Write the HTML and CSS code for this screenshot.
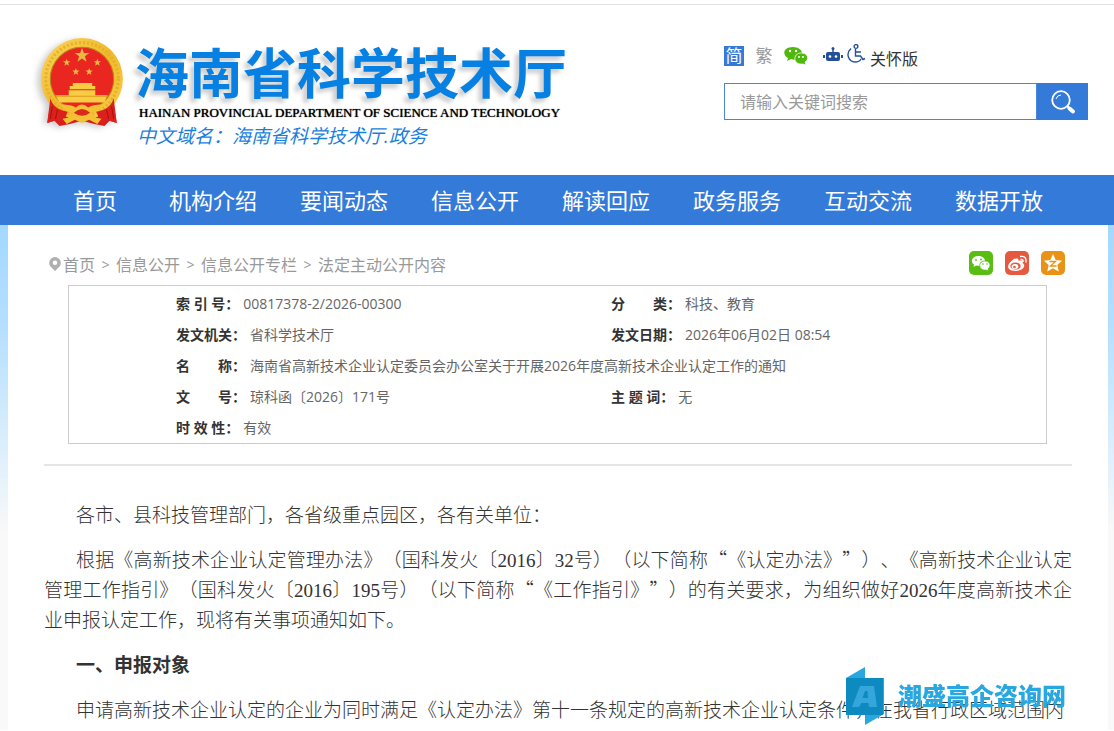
FILE: index.html
```html
<!DOCTYPE html>
<html lang="zh-CN">
<head>
  <meta charset="UTF-8" />
  <meta name="viewport" content="width=device-width, initial-scale=1.0"/>
  <title>海南省科学技术厅</title>
  <link rel="stylesheet" href="styles.css">
</head>
<body>

  <header class="header">
    <a class="logo" href="#">
      <svg class="emblem" viewBox="2 1 84 90" aria-hidden="true">
        <defs>
          <linearGradient id="gold" x1="0" y1="0" x2="1" y2="1">
            <stop offset="0" stop-color="#fbd75c"/>
            <stop offset="0.5" stop-color="#f0b92b"/>
            <stop offset="1" stop-color="#f8cf48"/>
          </linearGradient>
          <path id="star" d="M0-10 2.4-3.2 9.5-3.1 3.8 1.2 5.9 8.1 0 4 -5.9 8.1 -3.8 1.2 -9.5-3.1 -2.4-3.2Z"/>
        </defs>
        <path d="M14 62 10 86 17 84 22 89 32 87 44 84 56 87 66 89 71 84 78 86 74 62Z" fill="#d81e1c"/>
        <circle cx="44" cy="43" r="40" fill="url(#gold)"/>
        <circle cx="44" cy="43" r="35.500" fill="none" stroke="#e5b02c" stroke-width="3" stroke-dasharray="2 2"/>
        <circle cx="44" cy="43" r="31" fill="#e92720" stroke="#b9801b"/>
        <g fill="#e9b941">
          <use href="#star" transform="translate(44 20) scale(.75)"/>
          <use href="#star" transform="translate(29 27) scale(.38)"/>
          <use href="#star" transform="translate(59 27) scale(.38)"/>
          <use href="#star" transform="translate(38 36) scale(.38)"/>
          <use href="#star" transform="translate(51 36) scale(.38)"/>
        </g>
        <path d="M35 47h19v3h3v3H32v-3h3zM31 54h26v5h12l-3 7H22l-4-7h13z" fill="#f8cc43"/>
        <path d="M18 60h52" stroke="#d99b21"/>
        <path d="M13 62q3 11 17 13l-5 12-5-4-10 3zM75 62q-3 11-17 13l5 12 5-4 10 3z" fill="#dc211c"/>
        <path d="M15 70l-2 12M20 73l-2 9M73 70l2 12M68 73l2 9" stroke="#a6120f" fill="none"/>
        <path d="M24 68q10 0 14 3 6-6 12 0 4-3 14-3-2 7-11 8l5 5 5 1-4 5-8-4-7 3-7-3-8 4-4-5 5-1 5-5q-9-1-11-8z" fill="#f4c135"/>
        <path d="M36 76q8-7 16 0-8 6-16 0z" fill="#d92a1c"/>
      </svg>
      <span class="logo-text">
        <strong class="logo-cn">海南省科学技术厅</strong>
        <span class="logo-en">HAINAN PROVINCIAL DEPARTMENT OF SCIENCE AND TECHNOLOGY</span>
        <span class="logo-domain">中文域名：海南省科学技术厅.政务</span>
      </span>
    </a>

    <div class="tools">
      <div class="tool-links">
        <a class="lang lang-on" href="#">简</a>
        <a class="lang" href="#">繁</a>
        <a class="wechat" href="#" aria-label="微信">
          <svg width="24" height="18" viewBox="0 0 24 18">
            <path d="M9 0c5 0 9 3 9 6-5 0-8 3-7 7l-4-1-4 2 1-3C-2 8-1 0 9 0z" fill="#4fb80c"/>
            <path d="M17 6c8 0 8 7 4 9l1 3-3-1c-11 1-10-11-2-11z" fill="#4fb80c" stroke="#fff" stroke-width=".7"/>
            <g fill="#fff"><circle cx="6" cy="4" r="1.200"/><circle cx="12" cy="4" r="1.200"/><circle cx="15" cy="10" r="1"/><circle cx="19" cy="10" r="1"/></g>
          </svg>
        </a>
        <a class="robot" href="#" aria-label="智能问答">
          <svg width="20" height="15" viewBox="0 0 20 15">
            <path d="M10 1v4" stroke="#24509a" stroke-width="1.500"/>
            <circle cx="10" cy="1.500" r="1.500" fill="#24509a"/>
            <rect x="3" y="5" width="14" height="9" rx="2" fill="#24509a"/>
            <path d="M0 8h2v3H0zM18 8h2v3h-2z" fill="#24509a"/>
            <circle cx="7" cy="9.500" r="1.300" fill="#fff"/><circle cx="13" cy="9.500" r="1.300" fill="#fff"/>
          </svg>
        </a>
        <a class="care" href="#">
          <svg width="19" height="20" viewBox="0 0 19 20" fill="none" stroke="#24509a" stroke-width="1.400">
            <circle cx="9" cy="2.500" r="1.900"/>
            <path d="M4 4.500C-2 10 2 18 8 18c3 0 5-1 6-3M8.500 5v7h5l2.500 3.500 2-1M9 8h5"/>
          </svg>
          <span>关怀版</span>
        </a>
      </div>
      <form class="search">
        <input type="text" id="searchInput" placeholder="请输入关键词搜索" aria-label="请输入关键词搜索" />
        <button type="button" aria-label="搜索">
          <svg width="26" height="26" viewBox="0 0 26 26" fill="none" stroke="#fff">
            <circle cx="11" cy="11" r="8.800" stroke-width="1.800"/>
            <path d="M6 10q1-4 5-4" stroke-width="1"/>
            <path d="m17.500 17.500 2 2" stroke-width="2"/>
            <path d="m19.500 19.500 3.500 3" stroke-width="4" stroke-linecap="round"/>
          </svg>
        </button>
      </form>
    </div>
  </header>

  <nav class="nav">
    <a href="#">首页</a>
    <a href="#">机构介绍</a>
    <a href="#">要闻动态</a>
    <a href="#">信息公开</a>
    <a href="#">解读回应</a>
    <a href="#">政务服务</a>
    <a href="#">互动交流</a>
    <a href="#">数据开放</a>
  </nav>

  <div class="page">
    <main class="content">
      <div class="top-bar">
        <div class="crumbs">
          <svg width="12" height="14" viewBox="0 0 12 14"><path d="M6 0a6 6 0 0 1 5 9l-5 5-5-5A6 6 0 0 1 6 0zm0 3.500a2.300 2.300 0 1 0 0 4.600 2.300 2.300 0 0 0 0-4.600z" fill="#b0b0b0"/></svg>
          <a href="#">首页</a><i>&gt;</i><a href="#">信息公开</a><i>&gt;</i><a href="#">信息公开专栏</a><i>&gt;</i><a href="#">法定主动公开内容</a>
        </div>
        <div class="share">
          <a class="share-wechat" href="#" aria-label="分享到微信">
            <svg viewBox="0 0 24 24">
              <path d="M9 5c4 0 7 2 7 5-4 0-6 2-5 5l-4-.5L4.500 16 5 13.500C1 11 3 5 9 5z" fill="#fff"/>
              <path d="M15.500 10c6 0 7 5 3.500 8l.5 2-2.500-1c-8 1-8-9-1.500-9z" fill="#fff" stroke="#5abe12" stroke-width=".7"/>
              <g fill="#5abe12"><circle cx="7" cy="9" r=".9"/><circle cx="12" cy="8.500" r=".9"/><circle cx="14" cy="13" r=".8"/><circle cx="18" cy="13" r=".8"/></g>
            </svg>
          </a>
          <a class="share-weibo" href="#" aria-label="分享到微博">
            <svg viewBox="0 0 24 24">
              <path d="M10 8c2-1 4-.5 3.500 2 3-1 5 0 4 2 4 2 1 8-7 8-9 0-9-6-4-10 2-2 4-3 3.500-2z" fill="#fff"/>
              <ellipse cx="10.500" cy="15" rx="5.200" ry="3.600" fill="#e6583f"/>
              <ellipse cx="10" cy="15.500" rx="3.400" ry="2.600" fill="#fff"/>
              <circle cx="9.500" cy="16" r="1.300" fill="#e6583f"/>
              <path d="M15.500 8.500q3-.5 2.500 2.500M15 5.500q7-1 6 6" fill="none" stroke="#fff" stroke-width="1.500"/>
            </svg>
          </a>
          <a class="share-qzone" href="#" aria-label="分享到QQ空间">
            <svg viewBox="0 0 24 24">
              <path d="m12 3 2.700 6 6.300.8-4.700 4.200 1.400 6.500L12 17.200l-5.700 3.300L7.700 14 3 9.800 9.300 9z" fill="#fff"/>
              <path d="M8.500 10.500h6l-5 4.500h6" fill="none" stroke="#e89316" stroke-width="1.300"/>
            </svg>
          </a>
        </div>
      </div>

      <table class="info">
        <tr>
          <td><b>索 引 号：</b>00817378-2/2026-00300</td>
          <td><b>分&emsp;&emsp;类：</b>科技、教育</td>
        </tr>
        <tr>
          <td><b>发文机关：</b>省科学技术厅</td>
          <td><b>发文日期：</b>2026年06月02日 08:54</td>
        </tr>
        <tr>
          <td colspan="2"><b>名&emsp;&emsp;称：</b>海南省高新技术企业认定委员会办公室关于开展2026年度高新技术企业认定工作的通知</td>
        </tr>
        <tr>
          <td><b>文&emsp;&emsp;号：</b>琼科函〔2026〕171号</td>
          <td><b>主 题 词：</b>无</td>
        </tr>
        <tr>
          <td colspan="2"><b>时 效 性：</b>有效</td>
        </tr>
      </table>

      <article class="article">
        <p>各市、县科技管理部门，各省级重点园区，各有关单位：</p>
        <p>根据《高新技术企业认定管理办法》（国科发火〔2016〕32号）（以下简称<span class="quote">“</span>《认定办法》<span class="quote">”</span>）、《高新技术企业认定管理工作指引》（国科发火〔2016〕195号）（以下简称<span class="quote">“</span>《工作指引》<span class="quote">”</span>）的有关要求，为组织做好2026年度高新技术企业申报认定工作，现将有关事项通知如下。</p>
        <p><strong>一、申报对象</strong></p>
        <p>申请高新技术企业认定的企业为同时满足《认定办法》第十一条规定的高新技术企业认定条件，在我省行政区域范围内</p>
      </article>
    </main>
  </div>

  <!-- floating site mark -->
  <div class="watermark">
    <svg width="38" height="58" viewBox="0 0 38 58">
      <path d="M0 11 19 0v58l19-11V11z" fill="#29a7e1"/>
      <path d="M0 11h37v37H0z" fill="#0d8abf"/>
      <path d="M14 19h14l3 21h-8l-.5-4h-7L13 40H6zm5 5-2.500 7H22l-.5-7z" fill="#35a6dc" fill-rule="evenodd"/>
    </svg>
    <span>潮盛高企咨询网</span>
  </div>

</body>
</html>
```
FILE: styles.css
```css
* {
  box-sizing: border-box;
}
body {
  margin: 0;
  font-family: "Open Sans", "Noto Sans CJK SC", sans-serif;
  font-size: 16px;
  color: #333;
  background: #fff;
  text-spacing-trim: space-all;
}
a {
  color: inherit;
  text-decoration: none;
}
svg {
  display: block;
  flex: none;
}

/* Header */
.header {
  display: flex;
  justify-content: space-between;
  height: 171px;
  margin-top: 4px;
  padding: 31px 26px 0 38px;
  border-top: 1px solid #e2e2e2;
}
.logo {
  display: flex;
  gap: 9px;
}
.emblem {
  width: 88px;
  height: 92px;
  filter: drop-shadow(-4px 2px 3px rgba(0, 0, 0, 0.2));
}
.logo-text {
  display: flex;
  flex-direction: column;
  white-space: nowrap;
}
.logo-cn {
  height: 68px;
  line-height: 74px;
  font-size: 54px;
  font-weight: 700;
  color: #0780e3;
  text-shadow: -4px 4px 4px rgba(0, 0, 0, 0.2);
}
.logo-en {
  padding-left: 4px;
  font: 13px/18px "Liberation Serif", serif;
  color: #000;
  text-shadow: 0 0 1px #000;
}
.logo-domain {
  padding-left: 2px;
  font-size: 19px;
  line-height: 29px;
  font-style: italic;
  color: #1b7fdc;
}
.tools {
  width: 364px;
}
.tool-links {
  display: flex;
  align-items: center;
  height: 40px;
}
.lang {
  width: 20px;
  margin-right: 10px;
  font-size: 17px;
  line-height: 20px;
  text-align: center;
  color: #999;
}
.lang-on {
  background: #347bd9;
  color: #fff;
}
.robot {
  margin: 0 4px 4px 15px;
}
.care {
  display: flex;
  align-items: center;
  gap: 4px;
  line-height: 20px;
}
.care svg {
  margin-bottom: 4px;
}
.care span {
  padding-top: 5px;
}
.search {
  display: flex;
  height: 37px;
  margin-top: 7px;
}
.search input {
  flex: 1;
  min-width: 0;
  padding: 0 15px;
  border: 1px solid #4a86d6;
  font-family: inherit;
  font-size: 16px;
}
.search input::placeholder {
  color: #999;
}
.search button {
  display: flex;
  align-items: center;
  justify-content: center;
  width: 51px;
  padding: 0;
  border: none;
  background: #347bd9;
  cursor: pointer;
}

/* Main menu */
.nav {
  display: flex;
  gap: 43px;
  padding: 0 73px;
  background: #347bd9;
  color: #fff;
  font-size: 22px;
  line-height: 50px;
  white-space: nowrap;
}
.nav a:first-child {
  margin-right: 9px;
}

/* Content */
.page {
  padding: 0 6px 0 8px;
  background: #f9f9f9 linear-gradient(#a3d8ff, #b4dfff 100px, #f9f9f9 310px) no-repeat;
}
.content {
  padding: 26px 36px 0 36px;
  background: #fff;
}
.top-bar {
  display: flex;
  justify-content: space-between;
  height: 29px;
  padding: 0 7px 0 5px;
}
.crumbs {
  display: flex;
  align-items: center;
  height: 26px;
  color: #999;
}
.crumbs svg {
  margin-right: 2px;
}
.crumbs i {
  width: 21px;
  font-size: 14px;
  font-style: normal;
  text-align: center;
}
.share {
  display: flex;
  gap: 12px;
}
.share a {
  width: 24px;
  height: 24px;
  border-radius: 5px;
}
.share-wechat {
  background: #5abe12;
}
.share-weibo {
  background: #e6583f;
}
.share-qzone {
  background: #e89316;
}

.info {
  width: calc(100% - 49px);
  margin: 5px 24px 0;
  padding: 2px 0 0 107px;
  border: 1px solid #ccc;
  border-spacing: 0;
  table-layout: fixed;
  font-size: 14px;
  line-height: 31px;
  color: #666;
}
.info td {
  padding: 0;
}
.info b {
  margin-right: 4px;
  color: #333;
}

.article {
  margin-top: 20px;
  padding-top: 22px;
  border-top: 2px solid #e5e5e5;
  font-family: "Liberation Serif", "Noto Sans CJK SC", serif;
  font-size: 19px;
  font-weight: 300;
  line-height: 30px;
  text-align: justify;
}
.article p {
  margin: 0;
  padding: 0 0 15px;
  text-indent: 32px;
}
.article p:first-child {
  padding-top: 13px;
}
.article p:last-child {
  padding-bottom: 4px;
}
.article strong {
  font-weight: 700;
}
.quote {
  font-family: "Noto Sans CJK SC", sans-serif;
  line-height: 20px;
}

.watermark {
  position: fixed;
  right: 48px;
  bottom: 6px;
  display: flex;
  align-items: center;
  gap: 14px;
  font-size: 24px;
  line-height: 24px;
  font-weight: 900;
  color: #29a7e1;
}
```
